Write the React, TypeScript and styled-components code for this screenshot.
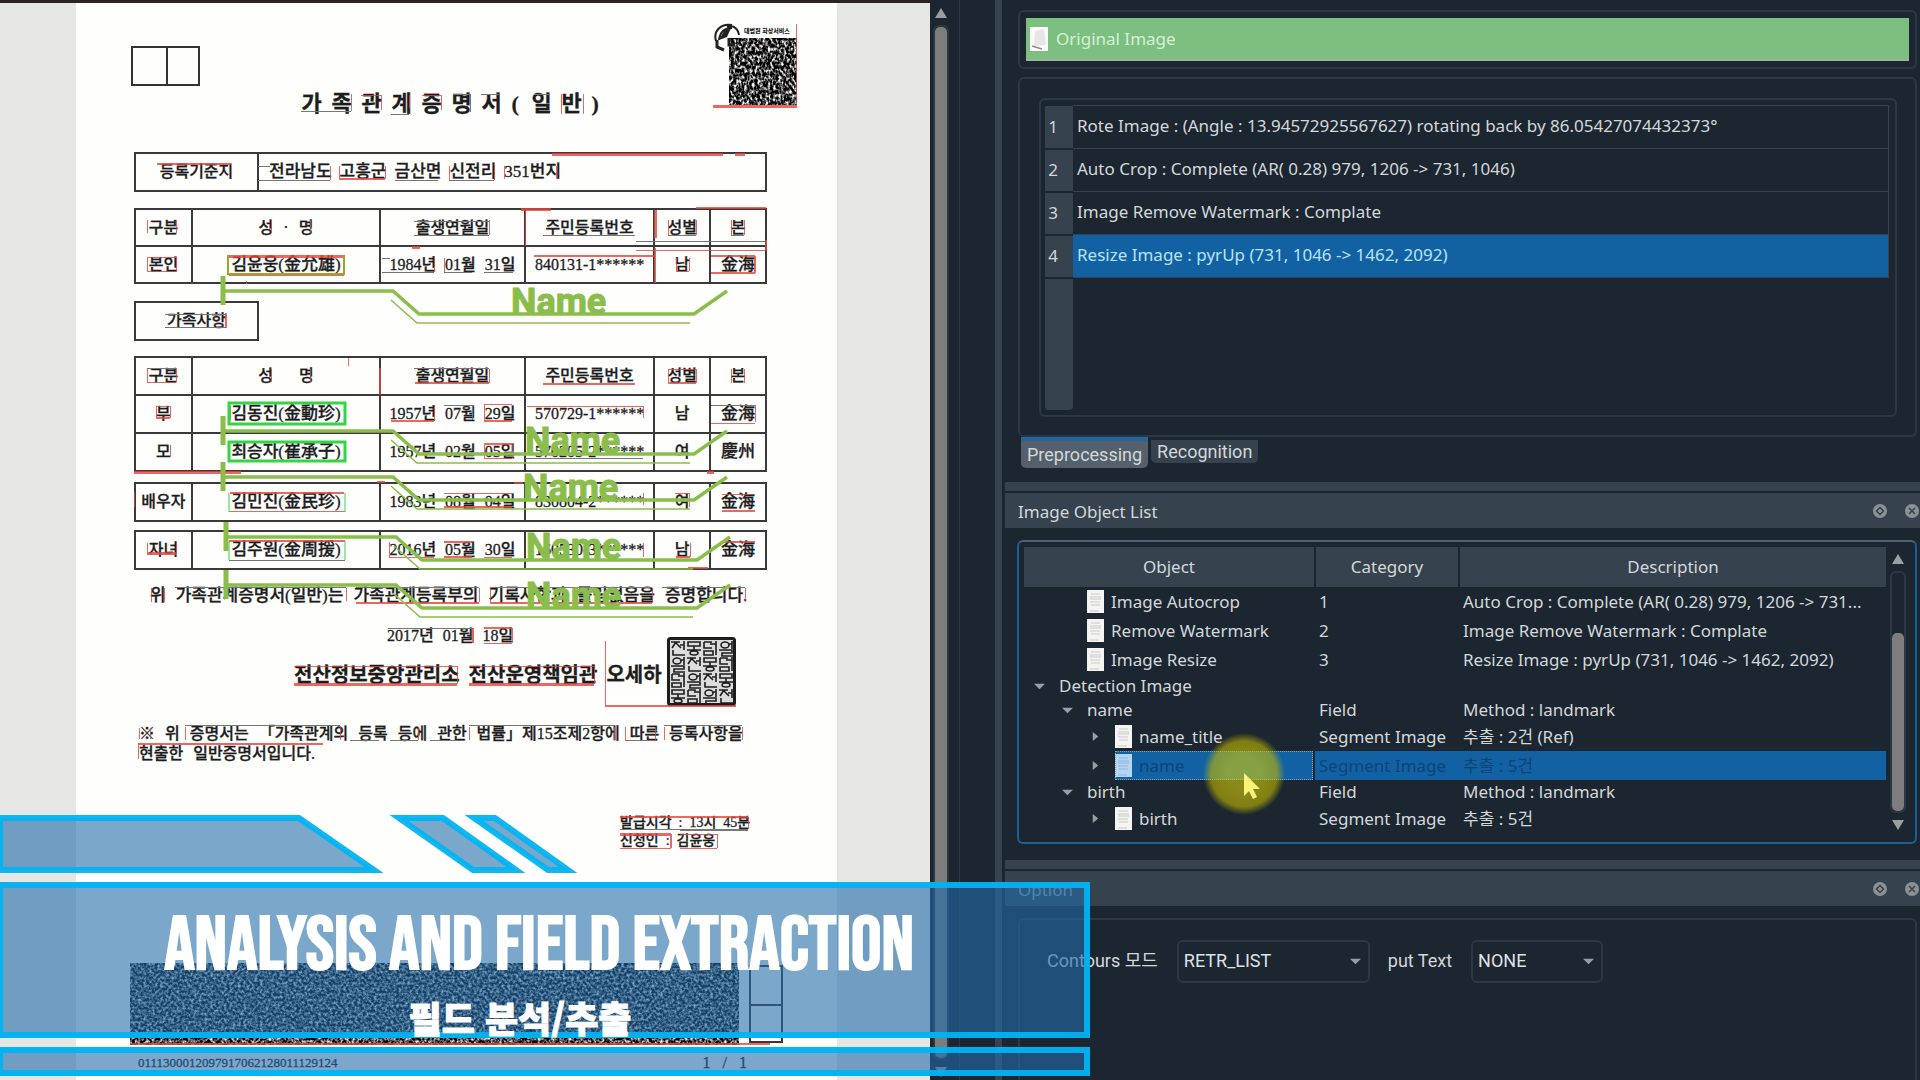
import React from "react";
import styled, { createGlobalStyle, css } from "styled-components";

const UI_FONT = `"Noto Sans", "Noto Sans CJK KR", sans-serif`;
const DOC_FONT = `"Liberation Serif", "Noto Sans CJK KR", serif`;

const color = {
  bg: "#1c2630",
  bar: "#36434e",
  line: "#2b3742",
  text: "#d3d7da",
  select: "#1262a3",
  green: "#8bbd4b",
  cyan: "rgba(0, 180, 242, 0.94)",
};

const GlobalStyle = createGlobalStyle`
  * { box-sizing: border-box; }
  body { margin: 0; background: ${color.bg}; overflow: hidden; }
`;

const Screen = styled.div`
  position: relative;
  display: flex;
  height: 100vh;
  overflow: hidden;
  background: ${color.bg};
  color: ${color.text};
  font-family: ${UI_FONT};
  font-size: 17px;
  line-height: 24px;
`;

/* ---------- document viewer ---------- */

const Viewer = styled.main`
  position: relative;
  flex: none;
  padding: 0 93px 0 76px;
  overflow: hidden;
  background: #e6e6e5;
  border-top: 3px solid #2a2426;
`;

const Page = styled.article`
  width: 761px;
  min-height: 100%;
  padding: 20px 70px 0 58px;
  background: #fefefd;
  color: #1d1d1d;
  font-family: ${DOC_FONT};
  font-size: 16px;
  line-height: 20px;
  font-weight: 500;
  -webkit-text-stroke: 0.3px #1d1d1d;
`;

const PageHeader = styled.header`
  display: flex;
  justify-content: space-between;
  height: 93px;
  margin: 0 -30px 36px -3px;
`;

const StampBoxes = styled.div`
  display: grid;
  grid-template-columns: 1fr 1fr;
  width: 69px;
  height: 40px;
  margin-top: 23px;
  border: 2px solid #333;
  & > i + i { border-left: 2px solid #333; }
`;

const DocTitle = styled.h1`
  display: flex;
  align-self: flex-end;
  margin: 0;
  padding-left: 10px;
  font-size: 22px;
  font-weight: 700;
  line-height: 24px;
`;

const TitleCell = styled.span<{ $narrow?: boolean }>`
  width: ${(p) => (p.$narrow ? 20 : 30)}px;
`;

const DocTable = styled.table<{ $gap: number; $row?: number }>`
  width: 100%;
  margin-bottom: ${(p) => p.$gap}px;
  border-collapse: collapse;
  table-layout: fixed;
  th, td {
    height: ${(p) => p.$row ?? 38}px;
    padding: 0;
    border: 2px solid #3a3a3a;
    font-weight: 500;
    text-align: center;
    white-space: nowrap;
  }
`;

const WideCell = styled.td`
  && { padding-left: 10px; text-align: left; font-size: 17px; }
`;

const Words = styled.span<{ $gap?: number }>`
  display: inline-flex;
  gap: ${(p) => p.$gap ?? 9}px;
`;

const PersonName = styled.span`
  font-size: 17px;
`;

const FamilyBox = styled.h2`
  display: flex;
  align-items: center;
  justify-content: center;
  width: 125px;
  height: 40px;
  margin: 0 0 15px;
  border: 2px solid #3a3a3a;
  font-size: 16px;
  font-weight: 500;
`;

const Statement = styled.p`
  display: flex;
  gap: 10px;
  margin: 0 -20px 16px 16px;
  font-size: 17px;
  line-height: 24px;
  white-space: nowrap;
`;

const Signature = styled.div`
  display: flex;
  justify-content: space-between;
  align-items: flex-end;
  height: 82px;
  margin: 0 31px 18px 160px;
`;

const SignText = styled.div`
  display: grid;
  align-self: flex-start;
  gap: 15px;
  line-height: 24px;
  white-space: nowrap;
`;

const SignDate = styled.div`
  padding-left: 93px;
`;

const Office = styled.div`
  display: flex;
  gap: 9px;
  font-size: 20px;
  font-weight: 700;
`;

const Note = styled.p`
  display: flex;
  flex-wrap: wrap;
  gap: 0 10px;
  margin: 0 -8px 50px 5px;
  font-size: 16px;
  white-space: nowrap;
`;

const Issue = styled.div`
  margin-left: 486px;
  font-size: 14px;
  line-height: 18px;
  white-space: nowrap;
`;

const BarcodeRow = styled.div`
  display: flex;
  gap: 10px;
  height: 82px;
  margin: 113px -16px 9px -4px;
`;

const SideBoxes = styled.div`
  display: grid;
  grid-template-rows: 1fr 1fr;
  width: 34px;
  margin: 2px 0;
  border: 2px solid #40343c;
  & > i + i { border-top: 2px solid #5a2a38; }
`;

const PageFooter = styled.footer`
  display: flex;
  justify-content: space-between;
  padding: 0 20px 0 4px;
  font-size: 13px;
  line-height: 18px;
`;

const PageNumber = styled.span`
  display: flex;
  gap: 12px;
  font-size: 16px;
`;

const Overlay = styled.svg`
  position: absolute;
  top: -3px;
  left: 0;
  pointer-events: none;
`;

type Seg = [number, number, number, number, number?];

const RED: Seg[] = [
  [351, 94, 351, 111], [381, 95, 381, 110], [361, 95, 381, 95], [409, 95, 409, 108], [422, 95, 441, 95], [441, 95, 441, 110],
  [561, 94, 561, 114], [583, 94, 583, 114], [796, 24, 796, 104], [713, 106, 797, 106, 3],
  [552, 154, 723, 154, 3], [735, 154, 745, 154, 3], [157, 164, 231, 164, 2], [330, 166, 330, 180],
  [339, 166, 339, 179], [385, 166, 385, 179], [339, 179, 385, 179, 2], [449, 166, 449, 180], [494, 166, 494, 180],
  [504, 166, 504, 179], [556, 166, 556, 179],
  [521, 209, 551, 209, 3], [696, 208, 766, 208, 2], [655, 210, 655, 238, 3], [655, 248, 655, 283, 2],
  [147, 220, 147, 233], [176, 220, 176, 233], [271, 220, 271, 233], [310, 220, 310, 233], [489, 220, 489, 235],
  [668, 220, 668, 235], [696, 220, 696, 235], [731, 220, 731, 235], [744, 220, 744, 235],
  [636, 250, 766, 250], [766, 240, 766, 250, 2], [412, 247, 420, 247, 3], [525, 210, 525, 246],
  [147, 257, 176, 257], [147, 257, 147, 271], [176, 257, 176, 271], [147, 271, 176, 271],
  [229, 256, 344, 256, 3], [229, 274, 344, 274, 3], [434, 258, 434, 272], [444, 258, 444, 272],
  [534, 256, 655, 256, 2], [676, 258, 676, 271], [689, 258, 689, 271], [676, 271, 689, 271],
  [711, 256, 755, 256, 2], [711, 273, 755, 273, 2], [755, 256, 755, 273, 2], [246, 281, 246, 284],
  [226, 313, 226, 328, 2], [348, 358, 348, 366], [380, 368, 380, 395, 2],
  [147, 368, 147, 382], [176, 368, 176, 382], [147, 382, 176, 382], [271, 369, 271, 382], [310, 369, 310, 382],
  [415, 383, 489, 383, 2], [489, 369, 489, 383], [543, 384, 635, 384, 2],
  [668, 369, 696, 369], [668, 383, 696, 383, 2], [668, 369, 668, 383], [696, 369, 696, 383], [731, 369, 731, 383], [744, 369, 744, 383],
  [156, 406, 170, 406], [156, 418, 170, 418, 2], [156, 406, 156, 418], [170, 406, 170, 418],
  [391, 421, 434, 421, 2], [434, 405, 434, 421], [484, 404, 512, 404], [484, 421, 512, 421, 2], [484, 404, 484, 421],
  [527, 406, 643, 406], [643, 406, 643, 418], [755, 405, 755, 422], [711, 423, 755, 423],
  [230, 406, 230, 420], [170, 445, 170, 457], [484, 444, 512, 444, 2], [484, 458, 512, 458], [484, 444, 484, 458], [512, 444, 512, 458],
  [134, 472, 241, 472, 3], [707, 472, 714, 472, 3], [377, 482, 385, 482, 2], [514, 483, 523, 483, 2],
  [134, 492, 134, 507], [230, 493, 344, 493, 2], [229, 511, 345, 511], [444, 493, 512, 493], [444, 507, 512, 507, 2],
  [643, 493, 643, 505], [675, 493, 689, 493], [689, 493, 689, 507], [722, 494, 755, 494], [722, 511, 755, 511, 2],
  [147, 553, 176, 553, 3], [147, 543, 147, 553], [176, 543, 176, 553], [229, 541, 345, 541, 2], [389, 542, 389, 557],
  [389, 557, 434, 557], [444, 542, 472, 542, 2], [444, 557, 472, 557, 2], [484, 557, 512, 557], [643, 543, 643, 557],
  [676, 557, 690, 557, 2], [690, 543, 690, 557], [725, 542, 755, 542, 2], [688, 568, 708, 568, 2],
  [151, 588, 151, 602], [164, 588, 164, 602], [346, 588, 346, 601], [356, 603, 479, 603, 2], [479, 588, 479, 602],
  [490, 588, 490, 602], [490, 603, 652, 603, 2], [652, 588, 652, 602], [745, 588, 745, 602],
  [473, 628, 473, 643, 2], [484, 628, 512, 628, 2], [484, 643, 512, 643], [512, 628, 512, 643],
  [294, 666, 457, 666], [294, 684, 457, 684, 3], [457, 666, 457, 684], [469, 666, 594, 666], [469, 684, 594, 684, 3], [594, 666, 594, 684],
  [605, 641, 605, 706], [605, 706, 736, 706, 2],
  [139, 728, 139, 739], [150, 728, 150, 739], [185, 727, 185, 740], [340, 727, 340, 740], [418, 727, 418, 740],
  [469, 727, 469, 740], [614, 727, 614, 740], [625, 727, 625, 740], [655, 727, 655, 740], [664, 727, 664, 740], [742, 727, 742, 740],
  [138, 744, 323, 744, 2], [138, 745, 138, 759], [620, 817, 748, 817, 2], [748, 817, 748, 829],
  [620, 834, 671, 834, 3], [620, 848, 671, 848], [671, 834, 671, 848, 2], [680, 834, 717, 834], [680, 848, 717, 848], [717, 834, 717, 848],
  [130, 1044, 770, 1044, 2],
];

const GREY: Seg[] = [
  [301, 111, 351, 111], [391, 114, 409, 114], [453, 94, 470, 94], [470, 94, 470, 112], [481, 94, 499, 94], [534, 94, 549, 94],
  [258, 166, 270, 166], [258, 180, 330, 180], [395, 180, 438, 180], [449, 180, 494, 180],
  [414, 235, 489, 235], [414, 221, 489, 221], [543, 235, 635, 235], [668, 235, 696, 235], [731, 235, 744, 235],
  [636, 241, 766, 241, 1], [382, 258, 390, 258], [382, 272, 434, 272], [444, 272, 472, 272], [484, 272, 513, 272],
  [165, 327, 226, 327], [165, 314, 226, 314], [414, 368, 489, 368], [147, 368, 176, 368],
  [444, 405, 472, 405], [472, 405, 472, 420], [711, 405, 755, 405], [525, 458, 643, 458],
  [229, 560, 345, 560], [175, 587, 346, 587], [356, 587, 479, 587], [490, 587, 652, 587], [662, 587, 745, 587],
  [388, 628, 473, 628], [185, 725, 340, 725], [350, 740, 379, 740], [390, 740, 418, 740], [430, 740, 459, 740],
  [469, 725, 614, 725], [625, 740, 655, 740], [664, 725, 742, 725], [620, 829, 748, 829], [680, 830, 748, 830],
];

const ANNOTATIONS = [
  { x: 0, y: 0, labelX: 511, labelY: 314 },
  { x: 0, y: 140, labelX: 525, labelY: 453 },
  { x: 0, y: 186, labelX: 523, labelY: 500 },
  { x: 3, y: 246, labelX: 526, labelY: 559 },
  { x: 3, y: 294, labelX: 526, labelY: 608 },
];

const DetectionOverlay = () => (
  <Overlay width="930" height="1080" viewBox="0 0 930 1080" aria-hidden="true">
    <g stroke="#777" strokeWidth="1" shapeRendering="crispEdges">
      {GREY.map(([a, b, c, d], i) => <line key={i} x1={a} y1={b} x2={c} y2={d} />)}
    </g>
    <g stroke="#e2443b" opacity="0.8" shapeRendering="crispEdges">
      {RED.map(([a, b, c, d, w = 1], i) => <line key={i} x1={a} y1={b} x2={c} y2={d} strokeWidth={w} />)}
    </g>
    <g fill="none" stroke="#35d445" strokeWidth="2">
      <path d="M228 255v20M344 255v20M229 274h115" stroke="#9aa52a" />
      <rect x="229" y="403" width="116" height="21" strokeWidth="3" />
      <rect x="229" y="442" width="116" height="19" strokeWidth="3" />
      <path d="M229 493v19M345 493v19M229 541v19M345 541v19" strokeWidth="1" />
    </g>
    {ANNOTATIONS.map((a) => (
      <g key={a.y} fill="none" stroke={color.green}>
        <g transform={`translate(${a.x} ${a.y})`}>
          <path d="M223 276v29" strokeWidth="5" />
          <path d="M223 291H393L419 314H694L727 291" strokeWidth="3.5" />
          <path d="M391 300L417 323H690" strokeWidth="1.5" />
        </g>
        <text x={a.labelX} y={a.labelY} fill={color.green} stroke={color.green} strokeWidth="1" fontFamily="Roboto, sans-serif" fontWeight="700" fontSize="36">
          Name
        </text>
      </g>
    ))}
  </Overlay>
);

const Noise = ({ id, w, h, freq, tone }: { id: string; w: number; h: number; freq: string; tone: string }) => (
  <svg width={w} height={h} viewBox={`0 0 ${w} ${h}`} aria-hidden="true">
    <filter id={id} x="0" y="0" width="100%" height="100%" colorInterpolationFilters="sRGB">
      <feTurbulence type="fractalNoise" baseFrequency={freq} numOctaves="2" seed="7" />
      <feColorMatrix values={tone} />
    </filter>
    <rect width={w} height={h} filter={`url(#${id})`} />
  </svg>
);

const QrArt = () => (
  <svg width="84" height="85" viewBox="0 0 84 85" aria-hidden="true">
    <filter id="qr" x="0" y="0" width="100%" height="100%" colorInterpolationFilters="sRGB">
      <feTurbulence type="fractalNoise" baseFrequency="0.38 0.28" numOctaves="2" seed="3" />
      <feColorMatrix values="3 0 0 0 -1.25  3 0 0 0 -1.25  3 0 0 0 -1.25  0 0 0 0 1" />
    </filter>
    <rect x="16" y="15" width="68" height="67" filter="url(#qr)" />
    <path d="M3 18C0 8 8 0 19 2M6 17C7 9 12 5 19 5M14 4C20 2 25 5 26 12" stroke="#222" strokeWidth="2" fill="none" />
    <path d="M6 17L11 8L18 5L14 14Z" fill="#222" />
    <path d="M4 17v7l7 3M16 15v7h6" stroke="#222" strokeWidth="3" fill="none" />
    <text x="31" y="10" fontFamily="Noto Sans CJK KR" fontWeight="900" fontSize="6" fill="#222">대법원 화상서비스</text>
  </svg>
);

const SealArt = () => (
  <svg width="69" height="69" viewBox="0 0 69 69" aria-hidden="true">
    <rect x="1.5" y="1.5" width="66" height="66" rx="2" fill="#dcdcdc" stroke="#1d1d1d" strokeWidth="3" />
    <g stroke="#1d1d1d" strokeWidth="1.6" fill="none">
      {[0, 1, 2, 3].map((r) => [0, 1, 2, 3].map((c) => (
        <g key={`${r}${c}`} transform={`translate(${4 + c * 16} ${4 + r * 16})`}>
          {(r * 3 + c) % 4 === 0 && <path d="M0 1h9M5 1L1 7M5 2l5 5M13 0v9M9 4h4M2 9v5h12" />}
          {(r * 3 + c) % 4 === 1 && <path d="M1 1h12v4H1zM7 5v4M0 9h14M3 12a4 2 0 0 0 8 0a4 2 0 0 0-8 0" />}
          {(r * 3 + c) % 4 === 2 && <path d="M1 1v6h8M13 0v14M9 3h4M1 10h9v4H1zM1 1h7v3" />}
          {(r * 3 + c) % 4 === 3 && <path d="M2 4a4 3 0 0 0 8 0a4 3 0 0 0-8 0M13 0v8M10 3h3M0 9h13v3H3v3h11" />}
        </g>
      )))}
    </g>
  </svg>
);

const Columns = () => (
  <colgroup>
    {[57, 189, 145, 130, 56, 56].map((w, i) => <col key={i} style={{ width: `${(w / 633) * 100}%` }} />)}
  </colgroup>
);

const HeadRow = ({ dot }: { dot?: boolean }) => (
  <tr>
    <th scope="col">구분</th>
    <th scope="col"><Words $gap={dot ? 10 : 26}><span>성</span>{dot && <span>·</span>}<span>명</span></Words></th>
    <th scope="col">출생연월일</th>
    <th scope="col">주민등록번호</th>
    <th scope="col">성별</th>
    <th scope="col">본</th>
  </tr>
);

type Person = { role: string; name: string; date: string[]; id: string; sex: string; origin: string };

const PersonRow = ({ p }: { p: Person }) => (
  <tr>
    <td>{p.role}</td>
    <td><PersonName>{p.name}</PersonName></td>
    <td><Words>{p.date.map((d) => <span key={d}>{d}</span>)}</Words></td>
    <td>{p.id}</td>
    <td>{p.sex}</td>
    <td><PersonName>{p.origin}</PersonName></td>
  </tr>
);

const PEOPLE: Person[] = [
  { role: "본인", name: "김윤웅(金允雄)", date: ["1984년", "01월", "31일"], id: "840131-1******", sex: "남", origin: "金海" },
  { role: "부", name: "김동진(金動珍)", date: ["1957년", "07월", "29일"], id: "570729-1******", sex: "남", origin: "金海" },
  { role: "모", name: "최승자(崔承子)", date: ["1957년", "02월", "05일"], id: "570205-2******", sex: "여", origin: "慶州" },
  { role: "배우자", name: "김민진(金民珍)", date: ["1983년", "08월", "04일"], id: "830804-2******", sex: "여", origin: "金海" },
  { role: "자녀", name: "김주원(金周援)", date: ["2016년", "05월", "30일"], id: "160530-3******", sex: "남", origin: "金海" },
];

const Spread = ({ text }: { text: string }) => (
  <>{text.split(" ").map((w, i) => <span key={i}>{w}</span>)}</>
);

const DocumentViewer = () => (
  <Viewer>
    <Page lang="ko">
      <PageHeader>
        <StampBoxes><i /><i /></StampBoxes>
        <DocTitle>
          {"가족관계증명서(일반)".split("").map((c, i) => <TitleCell key={i} $narrow={c === "("}>{c}</TitleCell>)}
        </DocTitle>
        <QrArt />
      </PageHeader>
      <DocTable $gap={16}>
        <colgroup><col style={{ width: "19.5%" }} /><col /></colgroup>
        <tbody>
          <tr>
            <th scope="row">등록기준지</th>
            <WideCell><Words $gap={8}><Spread text="전라남도 고흥군 금산면 신전리 351번지" /></Words></WideCell>
          </tr>
        </tbody>
      </DocTable>
      <DocTable $gap={17} $row={37}>
        <Columns />
        <tbody><HeadRow dot /><PersonRow p={PEOPLE[0]} /></tbody>
      </DocTable>
      <FamilyBox>가족사항</FamilyBox>
      <DocTable $gap={10}>
        <Columns />
        <tbody><HeadRow /><PersonRow p={PEOPLE[1]} /><PersonRow p={PEOPLE[2]} /></tbody>
      </DocTable>
      <DocTable $gap={8}>
        <Columns />
        <tbody><PersonRow p={PEOPLE[3]} /></tbody>
      </DocTable>
      <DocTable $gap={14}>
        <Columns />
        <tbody><PersonRow p={PEOPLE[4]} /></tbody>
      </DocTable>
      <Statement><Spread text="위 가족관계증명서(일반)는 가족관계등록부의 기록사항과 틀림없음을 증명합니다." /></Statement>
      <Signature>
        <SignText>
          <SignDate><Words><Spread text="2017년 01월 18일" /></Words></SignDate>
          <Office><Spread text="전산정보중앙관리소 전산운영책임관 오세하" /></Office>
        </SignText>
        <SealArt />
      </Signature>
      <Note><Spread text="※ 위 증명서는 「가족관계의 등록 등에 관한 법률」제15조제2항에 따른 등록사항을 현출한 일반증명서입니다." /></Note>
      <Issue>
        <div><Words $gap={7}><Spread text="발급시각 : 13시 45분" /></Words></div>
        <div><Words $gap={7}><Spread text="신청인 : 김윤웅" /></Words></div>
      </Issue>
      <BarcodeRow>
        <Noise id="barcode" w={609} h={82} freq="0.36" tone="2.2 0 0 0 -0.78  2.2 0 0 0 -0.78  2.2 0 0 0 -0.78  0 0 0 0 1" />
        <SideBoxes><i /><i /></SideBoxes>
      </BarcodeRow>
      <PageFooter>
        <span>0111300012097917062128011129124</span>
        <PageNumber><Spread text="1 / 1" /></PageNumber>
      </PageFooter>
    </Page>
    <DetectionOverlay />
  </Viewer>
);

/* ---------- scroll bars ---------- */

const ScrollRail = styled.div<{ $top: number; $bottom: number; $side?: number }>`
  display: flex;
  flex-direction: column;
  align-items: center;
  flex: none;
  gap: 6px;
  padding: ${(p) => p.$top}px ${(p) => p.$side ?? 0}px ${(p) => p.$bottom}px;
`;

const Track = styled.div<{ $lead: number }>`
  flex: 1;
  width: 16px;
  padding-top: ${(p) => p.$lead}px;
  border: 2px solid ${color.line};
  border-radius: 6px;
  &::after {
    content: "";
    display: block;
    height: 100%;
    border-radius: 5px;
    background: #7d7d7d;
  }
`;

const Triangle = ({ dir, size = 12 }: { dir: "up" | "down" | "right" | "flat"; size?: number }) => (
  <svg width={size} height={size} viewBox="0 0 12 12" fill="#9a9ea2" aria-hidden="true">
    {dir === "up" && <path d="M6 1L12 11H0Z" />}
    {dir === "down" && <path d="M0 1H12L6 11Z" />}
    {dir === "flat" && <path d="M0 3H12L6 9Z" />}
    {dir === "right" && <path d="M3 1L9 6L3 11Z" />}
  </svg>
);

const Divider = styled.div`
  flex: none;
  width: 50px;
  border-right: 7px solid ${color.bar};
  padding-left: 7px;
  &::before {
    content: "";
    display: block;
    height: 100%;
    border-left: 1px solid ${color.line};
  }
`;

/* ---------- right side ---------- */

const Side = styled.aside`
  flex: 1;
  min-width: 0;
  display: flex;
  flex-direction: column;
  padding: 10px 0 0 3px;
`;

const Group = styled.section`
  margin: 0 3px 0 13px;
  border: 2px solid ${color.line};
  border-radius: 6px;
`;

const SourceGroup = styled(Group)`
  padding: 6px;
  margin-bottom: 8px;
`;

const SourceButton = styled.button`
  display: flex;
  align-items: center;
  gap: 8px;
  width: 100%;
  height: 43px;
  padding: 0 4px;
  border: 0;
  border-bottom: 2px solid #9fb3a2;
  background: #7cbf80;
  color: #d5f0d3;
  font: inherit;
`;

const ThumbSvg = styled.svg`
  flex: none;
`;

const Thumb = ({ tint = "#f4f4f2", ink = "#c9c9c6" }: { tint?: string; ink?: string }) => (
  <ThumbSvg width="17" height="23" viewBox="0 0 17 23" aria-hidden="true">
    <rect width="17" height="23" fill={tint} />
    <path d="M4 4h9M3 7h11M3 9h11M3 12h10M4 15h9M3 21h9" stroke={ink} />
  </ThumbSvg>
);

const SkewedThumb = () => (
  <ThumbSvg width="18" height="24" viewBox="0 0 18 24" aria-hidden="true">
    <rect width="18" height="24" fill="#fbfbfb" />
    <path d="M5 4L14 2L16 18L4 19Z" fill="#e6e6e6" />
    <path d="M2 19L12 22" stroke="#8d8d8d" strokeWidth="1.5" />
  </ThumbSvg>
);

const StepsGroup = styled(Group)`
  height: 360px;
  padding: 19px 18px 18px 19px;
`;

const StepsFrame = styled.div`
  display: flex;
  flex-direction: column;
  height: 100%;
  padding: 5px 6px 5px 4px;
  border: 2px solid ${color.line};
  border-radius: 6px;
`;

const StepsTable = styled.table`
  width: 100%;
  border-collapse: collapse;
  th {
    width: 28px;
    padding: 0 12px 0 0;
    background: ${color.bar};
    border-bottom: 2px solid ${color.bg};
    font-weight: 400;
    text-align: center;
  }
`;

const StepCell = styled.td<{ $active?: boolean }>`
  height: 43px;
  padding: 0 4px 2px;
  border: 1px solid ${color.bar};
  border-left: 0;
  ${(p) => p.$active && css`background: ${color.select}; color: #b9e2fb;`}
`;

const HeaderTail = styled.div`
  flex: 1;
  width: 28px;
  border-radius: 0 0 4px 4px;
  background: ${color.bar};
`;

const Tabs = styled.div`
  display: flex;
  align-items: flex-start;
  gap: 3px;
  height: 45px;
  margin-left: 16px;
  font-family: Roboto, sans-serif;
`;

const Tab = styled.button<{ $active?: boolean }>`
  height: ${(p) => (p.$active ? 31 : 23)}px;
  margin-top: ${(p) => (p.$active ? 0 : 3)}px;
  padding: 0 6px;
  border: 0;
  border-top: ${(p) => (p.$active ? "4px solid #2565a0" : "0")};
  border-radius: 0 0 5px 5px;
  background: ${(p) => (p.$active ? "#54616c" : color.bar)};
  color: ${color.text};
  font-family: inherit;
  font-size: 18px;
  line-height: 20px;
`;

const Splitter = styled.div`
  height: 9px;
  margin-bottom: 2px;
  background: ${color.bar};
`;

const DockBar = styled.header`
  display: flex;
  align-items: center;
  gap: 18px;
  height: 35px;
  padding: 0 1px 0 13px;
  background: ${color.bar};
  margin-bottom: 12px;
`;

const DockTitle = styled.h2<{ $dim?: boolean }>`
  flex: 1;
  margin: 0;
  padding-top: 3px;
  font-size: 17px;
  font-weight: 400;
  color: ${(p) => (p.$dim ? "#9aa5ae" : color.text)};
`;

const IconButton = styled.button`
  display: flex;
  padding: 0;
  border: 0;
  background: none;
`;

const Dock = ({ title, dim }: { title: string; dim?: boolean }) => (
  <>
    <Splitter />
    <DockBar>
      <DockTitle $dim={dim}>{title}</DockTitle>
      <IconButton aria-label={`Float ${title}`}>
        <svg width="14" height="14" viewBox="0 0 14 14"><circle cx="7" cy="7" r="7" fill="#8b9095" /><path d="M7 3.5L10.5 7L7 10.5L3.5 7Z" fill="none" stroke={color.bar} strokeWidth="1.5" /></svg>
      </IconButton>
      <IconButton aria-label={`Close ${title}`}>
        <svg width="14" height="14" viewBox="0 0 14 14"><circle cx="7" cy="7" r="7" fill="#8b9095" /><path d="M4 4l6 6M10 4l-6 6" stroke={color.bar} strokeWidth="1.5" /></svg>
      </IconButton>
    </DockBar>
  </>
);

const TreeFrame = styled.div`
  position: relative;
  display: flex;
  gap: 4px;
  height: 304px;
  margin: 0 3px 16px 12px;
  padding: 5px 9px 5px 5px;
  border: 2px solid #1b5f96;
  border-top-color: #4b6273;
  border-radius: 6px;
`;

const TreeScroll = styled.div`
  flex: 1;
  min-width: 0;
`;

const Tree = styled.table`
  width: 100%;
  border-collapse: collapse;
  table-layout: fixed;
  th {
    height: 40px;
    padding: 0;
    background: ${color.bar};
    font-weight: 400;
  }
  th + th { border-left: 2px solid ${color.bg}; }
`;

const TreeRow = styled.tr<{ $tall: boolean; $active?: boolean }>`
  height: ${(p) => (p.$tall ? 29 : 24)}px;
  color: ${(p) => (p.$active ? "#0d447a" : color.text)};
  td {
    padding: 0 4px;
    overflow: hidden;
    text-overflow: ellipsis;
    white-space: nowrap;
    line-height: 24px;
    ${(p) => p.$active && css`background: ${color.select};`}
  }
  && > td:first-child { padding: 0; background: none; }
`;

const Node = styled.div<{ $depth: number; $active?: boolean }>`
  display: flex;
  align-items: center;
  height: ${(p) => (p.$active ? "29px" : "auto")};
  padding-left: ${(p) => 10 + p.$depth * 28}px;
`;

const Arrow = styled.span`
  display: flex;
  width: 25px;
  flex: none;
`;

const NodeLabel = styled.span<{ $active?: boolean }>`
  flex: 1;
  display: flex;
  align-items: center;
  gap: 7px;
  height: ${(p) => (p.$active ? "29px" : "auto")};
  margin-right: 2px;
  ${(p) => p.$active && css`
    background: ${color.select};
    outline: 1px dotted #93a0a8;
    outline-offset: -1px;
  `}
`;

type TreeItem = { label: string; cat?: string; desc?: string; depth: number; open?: boolean; leaf?: boolean; thumb?: boolean; active?: boolean };

const TREE: TreeItem[] = [
  { label: "Image Autocrop", cat: "1", desc: "Auto Crop : Complete (AR( 0.28) 979, 1206 -> 731...", depth: 1, leaf: true, thumb: true },
  { label: "Remove Watermark", cat: "2", desc: "Image Remove Watermark : Complate", depth: 1, leaf: true, thumb: true },
  { label: "Image Resize", cat: "3", desc: "Resize Image : pyrUp (731, 1046 -> 1462, 2092)", depth: 1, leaf: true, thumb: true },
  { label: "Detection Image", depth: 0, open: true },
  { label: "name", cat: "Field", desc: "Method : landmark", depth: 1, open: true },
  { label: "name_title", cat: "Segment Image", desc: "추출 : 2건 (Ref)", depth: 2, thumb: true },
  { label: "name", cat: "Segment Image", desc: "추출 : 5건", depth: 2, thumb: true, active: true },
  { label: "birth", cat: "Field", desc: "Method : landmark", depth: 1, open: true },
  { label: "birth", cat: "Segment Image", desc: "추출 : 5건", depth: 2, thumb: true },
];

const Pointer = styled.div`
  position: absolute;
  left: 184px;
  top: 191px;
  width: 82px;
  height: 82px;
  border-radius: 50%;
  background: radial-gradient(closest-side, rgba(206, 200, 10, 0.62) 40%, rgba(190, 180, 0, 0.62) 80%, rgba(150, 140, 0, 0) 100%);
  svg { position: absolute; left: 41px; top: 40px; }
`;

const OptionGroup = styled(Group)`
  display: flex;
  align-items: flex-start;
  flex: 1;
  margin-bottom: -10px;
  padding: 20px 27px;
  font-size: 18px;
  font-family: Roboto, "Noto Sans CJK KR", sans-serif;
`;

const OptionLabel = styled.label`
  margin-right: 19px;
  line-height: 41px;
`;

const SelectWrap = styled.span<{ $width: number }>`
  display: grid;
  grid-template-columns: 1fr;
  align-items: center;
  width: ${(p) => p.$width}px;
  margin-right: 18px;
  & > * { grid-area: 1 / 1; }
  svg { justify-self: end; margin-right: 9px; }
`;

const Select = styled.select`
  appearance: none;
  height: 43px;
  padding: 0 5px 2px;
  border: 2px solid ${color.line};
  border-radius: 6px;
  background: ${color.bg};
  color: #dfe2e4;
  font: inherit;
`;

/* ---------- caption banner ---------- */

const Banner = styled.div`
  position: absolute;
  left: 0;
  bottom: 4px;
  display: grid;
  gap: 9px;
  width: 1090px;
  color: #fff;
  text-align: center;
`;

const plate = css`
  border: 6px solid ${color.cyan};
  border-left-width: 3px;
  background: rgba(33, 108, 170, 0.595);
`;

const CaptionPlate = styled.div`
  ${plate}
  height: 156px;
  padding: 21px 9px 0 0;
`;

const CaptionTitle = styled.h1`
  margin: 0 0 12px;
  font-family: "Bebas Neue", "Oswald", "Roboto Condensed", "Liberation Sans Narrow", "DejaVu Sans Condensed", sans-serif;
  font-size: 76px;
  line-height: 76px;
  font-weight: 400;
  -webkit-text-stroke: 2px #fff;
  white-space: nowrap;
`;

const CaptionSub = styled.p`
  margin: 0 0 0 -38px;
  font-family: "Noto Sans CJK KR", sans-serif;
  font-size: 36px;
  font-weight: 900;
  line-height: 40px;
  -webkit-text-stroke: 1px #fff;
`;

const ThinPlate = styled.div`
  ${plate}
  height: 29px;
`;

const App = () => (
  <Screen>
    <GlobalStyle />
    <DocumentViewer />
    <ScrollRail $top={7} $bottom={2} $side={3}>
      <Triangle dir="up" />
      <Track $lead={0} />
      <Triangle dir="down" />
    </ScrollRail>
    <Divider />
    <Side>
      <SourceGroup>
        <SourceButton><SkewedThumb />Original Image</SourceButton>
      </SourceGroup>
      <StepsGroup>
        <StepsFrame>
          <StepsTable>
            <tbody>
              {[
                "Rote Image : (Angle : 13.94572925567627) rotating back by 86.05427074432373°",
                "Auto Crop : Complete (AR( 0.28) 979, 1206 -> 731, 1046)",
                "Image Remove Watermark : Complate",
                "Resize Image : pyrUp (731, 1046 -> 1462, 2092)",
              ].map((t, i) => (
                <tr key={t}>
                  <th scope="row">{i + 1}</th>
                  <StepCell $active={i === 3}>{t}</StepCell>
                </tr>
              ))}
            </tbody>
          </StepsTable>
          <HeaderTail />
        </StepsFrame>
      </StepsGroup>
      <Tabs role="tablist">
        <Tab role="tab" aria-selected $active>Preprocessing</Tab>
        <Tab role="tab" aria-selected={false}>Recognition</Tab>
      </Tabs>
      <Dock title="Image Object List" />
      <TreeFrame>
        <TreeScroll>
          <Tree>
            <colgroup><col style={{ width: 291 }} /><col style={{ width: 144 }} /><col /></colgroup>
            <thead>
              <tr><th scope="col">Object</th><th scope="col">Category</th><th scope="col">Description</th></tr>
            </thead>
            <tbody>
              {TREE.map((n, i) => (
                <TreeRow key={i} $tall={!!n.thumb} $active={n.active}>
                  <td>
                    <Node $depth={n.depth} $active={n.active}>
                      <Arrow>{!n.leaf && <Triangle dir={n.open ? "flat" : "right"} size={11} />}</Arrow>
                      <NodeLabel $active={n.active}>
                        {n.thumb && <Thumb tint={n.active ? "#b4d6f4" : undefined} ink={n.active ? "#8ab8e0" : undefined} />}
                        {n.label}
                      </NodeLabel>
                    </Node>
                  </td>
                  <td>{n.cat}</td>
                  <td>{n.desc}</td>
                </TreeRow>
              ))}
            </tbody>
          </Tree>
        </TreeScroll>
        <ScrollRail $top={6} $bottom={6}>
          <Triangle dir="up" />
          <Track $lead={60} />
          <Triangle dir="down" />
        </ScrollRail>
        <Pointer>
          <svg width="17" height="27" viewBox="0 0 17 27" aria-hidden="true">
            <path d="M0 0V23L5 18L9 26L13 24L9 16H16Z" fill="#fbf27a" />
          </svg>
        </Pointer>
      </TreeFrame>
      <Dock title="Option" dim />
      <OptionGroup>
        <OptionLabel htmlFor="contours">Contours 모드</OptionLabel>
        <SelectWrap $width={193}>
          <Select id="contours" defaultValue="RETR_LIST"><option>RETR_LIST</option></Select>
          <Triangle dir="flat" size={11} />
        </SelectWrap>
        <OptionLabel htmlFor="put-text">put Text</OptionLabel>
        <SelectWrap $width={132}>
          <Select id="put-text" defaultValue="NONE"><option>NONE</option></Select>
          <Triangle dir="flat" size={11} />
        </SelectWrap>
      </OptionGroup>
    </Side>
    <Banner>
      <svg width="580" height="58" viewBox="0 0 580 58" aria-hidden="true">
        <g fill="rgba(33,108,170,0.595)" stroke={color.cyan} strokeWidth="6">
          <path d="M0 3H299L374 55H0Z" />
          <path d="M399 3H443L516 55H473Z" />
          <path d="M474 3H495L568 55H548Z" />
        </g>
      </svg>
      <CaptionPlate>
        <CaptionTitle>ANALYSIS AND FIELD EXTRACTION</CaptionTitle>
        <CaptionSub lang="ko">필드 분석/추출</CaptionSub>
      </CaptionPlate>
      <ThinPlate />
    </Banner>
  </Screen>
);

export default App;
